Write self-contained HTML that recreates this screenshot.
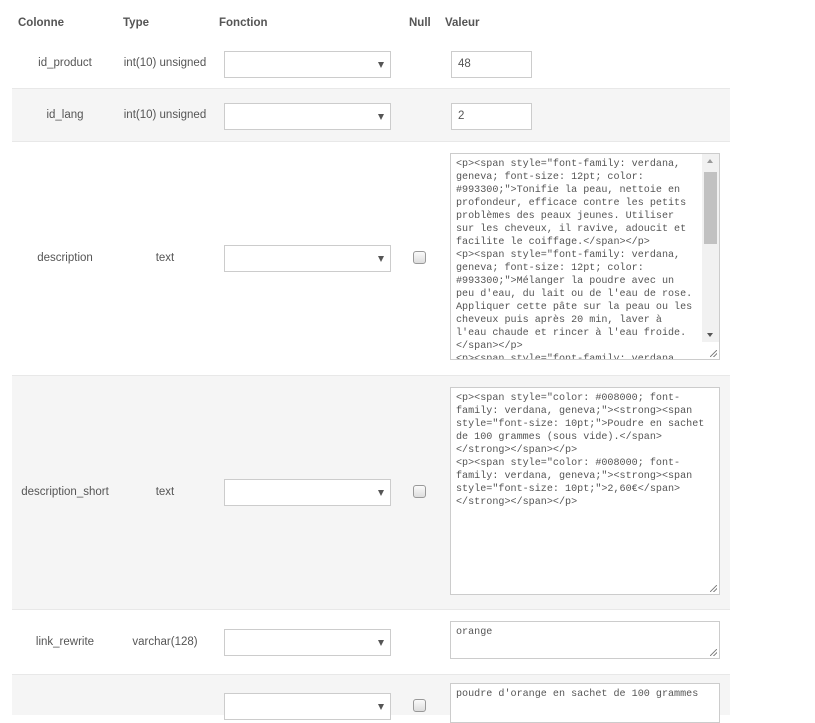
<!DOCTYPE html>
<html><head><meta charset="utf-8"><style>
*{box-sizing:border-box;margin:0;padding:0}
body{width:815px;height:701px;background:#fff;font-family:"Liberation Sans",sans-serif;font-size:11.5px;color:#555;position:relative;overflow:hidden}
.a{position:absolute}
.h{font-weight:bold;top:17px;color:#555}
.row{position:absolute;left:12px;width:718px;border-bottom:1px solid #e8e8e8}
.g{background:#f5f5f5}
.sel{position:absolute;left:224px;width:167px;height:27px;border:1px solid #ccc;background:#fff}
.sel:after{content:"";position:absolute;right:6px;top:10px;border-left:3.5px solid transparent;border-right:3.5px solid transparent;border-top:6px solid #555}
.inp{position:absolute;left:451px;width:81px;height:27px;border:1px solid #ccc;background:#fff;padding:6px 0 0 6px;color:#555}
.ta{position:absolute;left:450px;width:270px;border:1px solid #ccc;background:#fff;font-family:"Liberation Mono",monospace;font-size:10.1px;line-height:13px;white-space:pre;padding:4px 0 0 5px;color:#555;overflow:hidden}
.cb{position:absolute;left:413px;width:13px;height:13px;border:1px solid #999;border-radius:3px;background:linear-gradient(#fafafa,#ddd)}
.c1{position:absolute;width:106px;text-align:center;left:12px}
.c2{position:absolute;width:106px;text-align:center;left:112px}
.rs{position:absolute;right:2px;bottom:2px;width:7px;height:7px;background:linear-gradient(135deg,transparent 45%,#888 46%,#888 54%,transparent 55%,transparent 70%,#888 71%,#888 79%,transparent 80%)}
</style></head><body>
<div class="a h" style="left:18px;top:17px">Colonne</div>
<div class="a h" style="left:123px;top:17px">Type</div>
<div class="a h" style="left:219px;top:17px">Fonction</div>
<div class="a h" style="left:409px;top:17px">Null</div>
<div class="a h" style="left:445px;top:17px">Valeur</div>

<div class="row" style="top:37px;height:52px"></div>
<div class="row g" style="top:89px;height:53px"></div>
<div class="row" style="top:142px;height:234px"></div>
<div class="row g" style="top:376px;height:234px"></div>
<div class="row" style="top:610px;height:65px"></div>
<div class="row g" style="top:675px;height:40px;border:none"></div>

<div class="c1" style="top:57px">id_product</div><div class="c2" style="top:57px">int(10) unsigned</div>
<div class="sel" style="top:51px"></div><div class="inp" style="top:51px">48</div>
<div class="c1" style="top:109px">id_lang</div><div class="c2" style="top:109px">int(10) unsigned</div>
<div class="sel" style="top:103px"></div><div class="inp" style="top:103px">2</div>

<div class="c1" style="top:252px">description</div><div class="c2" style="top:252px">text</div>
<div class="sel" style="top:245px"></div><div class="cb" style="top:251px"></div>
<div class="ta" style="top:153px;height:207px">&lt;p&gt;&lt;span style="font-family: verdana,
geneva; font-size: 12pt; color:
#993300;"&gt;Tonifie la peau, nettoie en
profondeur, efficace contre les petits
problèmes des peaux jeunes. Utiliser
sur les cheveux, il ravive, adoucit et
facilite le coiffage.&lt;/span&gt;&lt;/p&gt;
&lt;p&gt;&lt;span style="font-family: verdana,
geneva; font-size: 12pt; color:
#993300;"&gt;Mélanger la poudre avec un
peu d'eau, du lait ou de l'eau de rose.
Appliquer cette pâte sur la peau ou les
cheveux puis après 20 min, laver à
l'eau chaude et rincer à l'eau froide.
&lt;/span&gt;&lt;/p&gt;
&lt;p&gt;&lt;span style="font-family: verdana,
<div class="a" style="right:0;top:0;width:17px;height:188px;background:#f1f1f1"><div class="a" style="left:2px;top:18px;width:13px;height:72px;background:#c1c1c1"></div><div class="a" style="left:5px;top:5px;border-left:3.5px solid transparent;border-right:3.5px solid transparent;border-bottom:4px solid #999"></div><div class="a" style="left:5px;bottom:5px;border-left:3.5px solid transparent;border-right:3.5px solid transparent;border-top:4px solid #555"></div></div><div class="rs"></div></div>

<div class="c1" style="top:486px">description_short</div><div class="c2" style="top:486px">text</div>
<div class="sel" style="top:479px"></div><div class="cb" style="top:485px"></div>
<div class="ta" style="top:387px;height:208px">&lt;p&gt;&lt;span style="color: #008000; font-
family: verdana, geneva;"&gt;&lt;strong&gt;&lt;span
style="font-size: 10pt;"&gt;Poudre en sachet
de 100 grammes (sous vide).&lt;/span&gt;
&lt;/strong&gt;&lt;/span&gt;&lt;/p&gt;
&lt;p&gt;&lt;span style="color: #008000; font-
family: verdana, geneva;"&gt;&lt;strong&gt;&lt;span
style="font-size: 10pt;"&gt;2,60€&lt;/span&gt;
&lt;/strong&gt;&lt;/span&gt;&lt;/p&gt;<div class="rs"></div></div>

<div class="c1" style="top:636px">link_rewrite</div><div class="c2" style="top:636px">varchar(128)</div>
<div class="sel" style="top:629px"></div>
<div class="ta" style="top:621px;height:38px">orange<div class="rs"></div></div>

<div class="sel" style="top:693px"></div><div class="cb" style="top:699px"></div>
<div class="ta" style="top:683px;height:40px">poudre d'orange en sachet de 100 grammes</div>
</body></html>
